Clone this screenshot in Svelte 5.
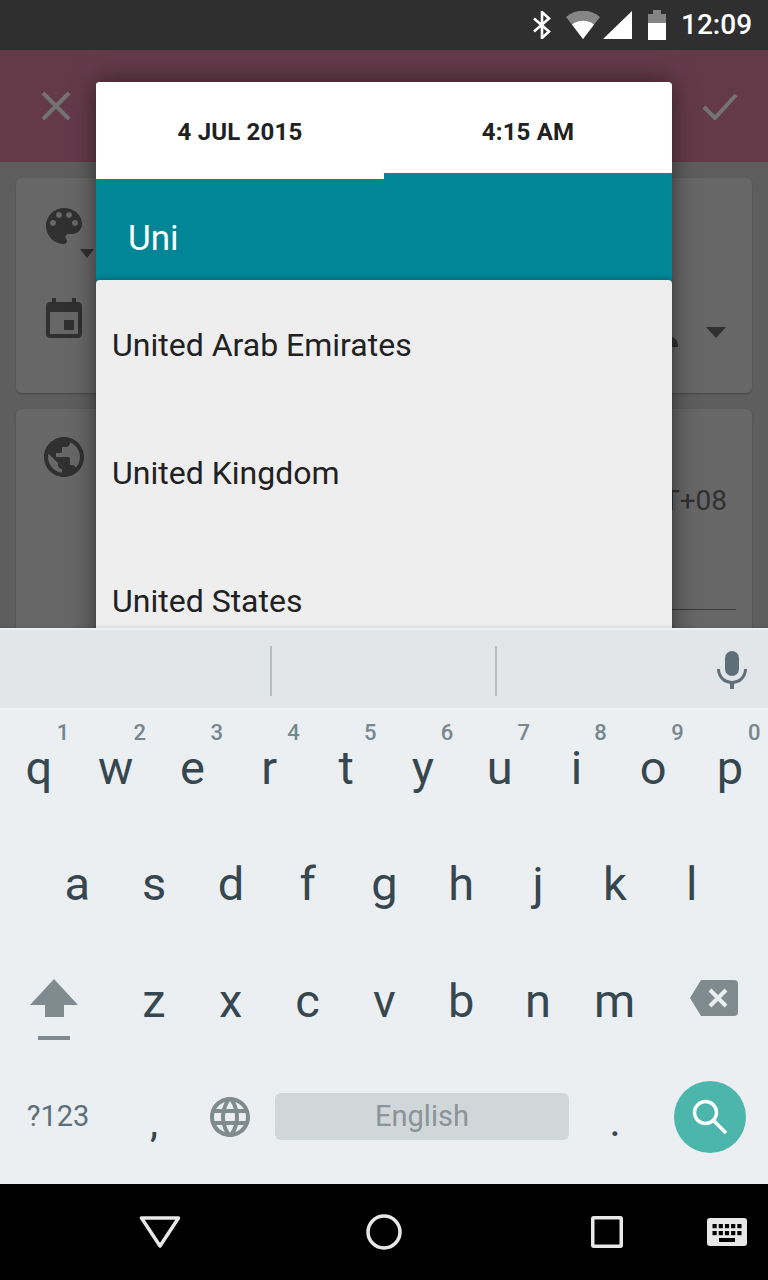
<script>
  const row1 = [['q','1'],['w','2'],['e','3'],['r','4'],['t','5'],['y','6'],['u','7'],['i','8'],['o','9'],['p','0']];
  const row2 = ['a','s','d','f','g','h','j','k','l'];
  const row3 = ['z','x','c','v','b','n','m'];
  const countries = ['United Arab Emirates','United Kingdom','United States'];
</script>

<div class="phone">
  <header class="status">
    <svg class="s-bt" width="20" height="28" viewBox="0 0 20 28"><path d="M2 7.5 L17 20.5 L10 27 V1 L17 7.5 L2 20.5" fill="none" stroke="#fff" stroke-width="2.6"/></svg>
    <svg class="s-wifi" width="34" height="28" viewBox="0 0 34 28"><path d="M0 6 A26 26 0 0 1 34 6 L17 28 Z" fill="#858585"/><path d="M6 13.5 A18 18 0 0 1 28 13.5 L17 28 Z" fill="#fff"/></svg>
    <svg class="s-sig" width="29" height="28" viewBox="0 0 29 28"><path d="M0 28 L29 0 V28 Z" fill="#fff"/></svg>
    <svg class="s-bat" width="20" height="30" viewBox="0 0 20 30"><path d="M1 4 H6 V0 H14 V4 H19 V13 H1 Z" fill="#858585"/><rect x="1" y="13" width="18" height="17" fill="#fff"/></svg>
    <span class="clock">12:09</span>
  </header>

  <div class="screen">
    <div class="toolbar">
      <svg width="32" height="32" viewBox="0 0 32 32"><path d="M3 3 L29 29 M29 3 L3 29" stroke="#737373" stroke-width="4"/></svg>
      <svg width="36" height="28" viewBox="0 0 36 28"><path d="M2 15 L13 26 L34 3" fill="none" stroke="#737373" stroke-width="4"/></svg>
    </div>
    <main class="content">
      <section class="card first">
        <svg class="ic" width="48" height="48" viewBox="0 0 24 24"><path fill="#303030" d="M12 3c-4.97 0-9 4.03-9 9s4.03 9 9 9c.83 0 1.5-.67 1.5-1.5 0-.39-.15-.74-.39-1.01-.23-.26-.38-.61-.38-.99 0-.83.67-1.5 1.5-1.5H16c2.76 0 5-2.24 5-5 0-4.42-4.03-8-9-8zm-5.5 9c-.83 0-1.5-.67-1.5-1.5S5.67 9 6.5 9 8 9.67 8 10.5 7.33 12 6.5 12zm3-4C8.67 8 8 7.33 8 6.5S8.67 5 9.5 5s1.5.67 1.5 1.5S10.33 8 9.5 8zm5 0c-.83 0-1.5-.67-1.5-1.5S13.67 5 14.5 5s1.5.67 1.5 1.5S15.33 8 14.5 8zm3 4c-.83 0-1.5-.67-1.5-1.5S16.67 9 17.5 9s1.5.67 1.5 1.5-.67 1.5-1.5 1.5z"/></svg>
        <span class="mini-caret"></span>
        <svg class="ic cal" width="48" height="48" viewBox="0 0 24 24"><path fill="#303030" d="M17 12h-5v5h5v-5zM16 1v2H8V1H6v2H5c-1.11 0-1.99.9-1.99 2L3 19c0 1.1.89 2 2 2h14c1.1 0 2-.9 2-2V5c0-1.1-.9-2-2-2h-1V1h-2zm3 18H5V8h14v11z"/></svg>
        <span class="blob"></span>
        <span class="caret"></span>
      </section>
      <section class="card second">
        <svg class="ic globe" width="48" height="48" viewBox="0 0 24 24"><path fill="#303030" d="M12 2C6.48 2 2 6.48 2 12s4.48 10 10 10 10-4.48 10-10S17.52 2 12 2zm-1 17.93c-3.95-.49-7-3.85-7-7.93 0-.62.08-1.21.21-1.79L9 15v1c0 1.1.9 2 2 2v1.93zm6.9-2.54c-.26-.81-1-1.39-1.9-1.39h-1v-3c0-.55-.45-1-1-1H8v-2h2c.55 0 1-.45 1-1V7h2c1.1 0 2-.9 2-2v-.41c2.93 1.19 5 4.06 5 7.41 0 2.08-.8 3.97-2.1 5.39z"/></svg>
        <div class="tz">GMT+08</div>
        <div class="tz-line"></div>
      </section>
    </main>

    <div class="dialog">
      <div class="tabs">
        <div class="tab active">4 JUL 2015</div>
        <div class="tab">4:15 AM</div>
      </div>
      <div class="search">Uni</div>
      <ul class="list">
        {#each countries as c}
          <li>{c}</li>
        {/each}
      </ul>
    </div>
  </div>

  <div class="keyboard">
    <div class="strip">
      <span class="sep one"></span>
      <span class="sep two"></span>
      <svg class="mic" width="30" height="38" viewBox="0 0 30 38"><rect x="8" y="0" width="14" height="25" rx="7" fill="#5e6f7a"/><path d="M1.5 18 C2 36 28 36 28.5 18" fill="none" stroke="#5e6f7a" stroke-width="3"/><rect x="13" y="30" width="4" height="8" fill="#5e6f7a"/></svg>
    </div>
    <div class="keys">
      <div class="row r1">
        {#each row1 as [k, h]}
          <div class="key">{k}<span class="hint">{h}</span></div>
        {/each}
      </div>
      <div class="row r2">
        {#each row2 as k}
          <div class="key">{k}</div>
        {/each}
      </div>
      <div class="row r3">
        <div class="key k-shift">
          <svg width="48" height="62" viewBox="0 0 48 62"><path d="M24 0 L48 26 H34 V38 H15 V26 H0 Z" fill="#7f8b8f"/><rect x="8" y="57" width="32" height="4" fill="#7f8b8f"/></svg>
        </div>
        {#each row3 as k}
          <div class="key">{k}</div>
        {/each}
        <div class="key k-back">
          <svg width="48" height="36" viewBox="0 0 48 36"><path d="M11 0 H44 Q48 0 48 4 V32 Q48 36 44 36 H11 L0 18 Z" fill="#7f8b8f"/><path d="M20 10 L36 26 M36 10 L20 26" stroke="#ebeff2" stroke-width="4"/></svg>
        </div>
      </div>
      <div class="row r4">
        <div class="key sym">?123</div>
        <div class="key punct">,</div>
        <div class="key">
          <svg width="48" height="48" viewBox="0 0 24 24"><path fill="#7f8b8f" d="M11.99 2C6.47 2 2 6.48 2 12s4.47 10 9.99 10C17.52 22 22 17.52 22 12S17.52 2 11.99 2zm6.93 6h-2.95c-.32-1.25-.78-2.45-1.38-3.56 1.84.63 3.37 1.91 4.33 3.56zM12 4.04c.83 1.2 1.48 2.53 1.91 3.96h-3.82c.43-1.43 1.08-2.76 1.91-3.96zM4.26 14C4.1 13.36 4 12.69 4 12s.1-1.36.26-2h3.38c-.08.66-.14 1.32-.14 2 0 .68.06 1.34.14 2H4.26zm.82 2h2.95c.32 1.25.78 2.45 1.38 3.56-1.84-.63-3.37-1.9-4.33-3.56zm2.95-8H5.08c.96-1.66 2.49-2.93 4.33-3.56C8.81 5.55 8.35 6.75 8.03 8zM12 19.96c-.83-1.2-1.48-2.53-1.91-3.96h3.82c-.43 1.43-1.08 2.76-1.91 3.96zM14.34 14H9.66c-.09-.66-.16-1.32-.16-2 0-.68.07-1.35.16-2h4.68c.09.65.16 1.32.16 2 0 .68-.07 1.34-.16 2zm.25 5.56c.6-1.11 1.06-2.31 1.38-3.56h2.95c-.96 1.65-2.49 2.93-4.33 3.56zM16.36 14c.08-.66.14-1.32.14-2 0-.68-.06-1.34-.14-2h3.38c.16.64.26 1.31.26 2s-.1 1.36-.26 2h-3.38z"/></svg>
        </div>
        <div class="key"><div class="space">English</div></div>
        <div class="key punct">.</div>
        <div class="key k-go">
          <div class="go">
            <svg width="36" height="36" viewBox="0 0 36 36"><circle cx="13.5" cy="13.5" r="11" fill="none" stroke="#fff" stroke-width="3.4"/><path d="M21.5 21.5 L34 34" stroke="#fff" stroke-width="3.6"/></svg>
          </div>
        </div>
      </div>
    </div>
  </div>

  <nav class="nav">
    <svg class="n-back" width="42" height="32" viewBox="0 0 42 32"><path d="M2.5 2 H39.5 L21 30 Z" fill="none" stroke="#e8e8e8" stroke-width="3.5" stroke-linejoin="round"/></svg>
    <svg class="n-home" width="36" height="36" viewBox="0 0 36 36"><circle cx="18" cy="18" r="16" fill="none" stroke="#e8e8e8" stroke-width="3.5"/></svg>
    <svg class="n-rec" width="32" height="32" viewBox="0 0 32 32"><rect x="1.75" y="1.75" width="28.5" height="28.5" rx="1" fill="none" stroke="#e8e8e8" stroke-width="3.5"/></svg>
    <svg class="n-kb" width="40" height="28" viewBox="0 0 40 28">
      <rect width="40" height="28" rx="3" fill="#e8e8e8"/>
      {#each [0,1,2,3,4] as i}
        <rect x={5.5 + i * 6.2} y="6" width="4.2" height="4.2" fill="#000"/>
        <rect x={5.5 + i * 6.2} y="13" width="4.2" height="4.2" fill="#000"/>
      {/each}
      <rect x="12" y="20" width="16" height="4" fill="#000"/>
    </svg>
  </nav>
</div>

<style>
  :global(body) { margin: 0; background: #000; }
  .phone {
    width: 768px; height: 1280px; display: flex; flex-direction: column; overflow: hidden;
    font-family: Roboto, "Liberation Sans", sans-serif;
  }
  .status {
    height: 50px; flex: none; background: #2f2f2f; display: flex; align-items: center;
    justify-content: flex-end; padding-right: 18px; box-sizing: border-box; color: #fff;
  }
  .s-bt { margin-right: 14px; }
  .s-wifi { margin-right: 3px; }
  .s-sig { margin-right: 15px; }
  .s-bat { margin-right: 14px; }
  .clock { font-size: 28px; font-weight: 500; line-height: 52px; width: 69px; white-space: nowrap; }

  .screen { position: relative; height: 578px; flex: none; overflow: hidden; background: #5e5e5e; }
  .toolbar {
    height: 112px; background: #643a49; display: flex; align-items: center;
    justify-content: space-between; padding: 0 30px 0 40px; box-sizing: border-box;
  }
  .content { padding: 16px; display: flex; flex-direction: column; gap: 16px; }
  .card {
    background: #676767; border-radius: 6px; position: relative;
    box-shadow: 0 1px 2px rgba(0,0,0,.25);
  }
  .first { height: 215px; padding: 24px 0 0 24px; box-sizing: border-box; }
  .second { height: 320px; padding: 24px 0 0 24px; box-sizing: border-box; }
  .ic { display: block; }
  .cal { margin-top: 46px; }
  .mini-caret {
    position: absolute; left: 64px; top: 71px; width: 0; height: 0;
    border-left: 7.5px solid transparent; border-right: 7.5px solid transparent; border-top: 9px solid #303030;
  }
  .caret {
    position: absolute; right: 26px; top: 149px; width: 0; height: 0;
    border-left: 10px solid transparent; border-right: 10px solid transparent; border-top: 11px solid #303030;
  }
  .blob { position: absolute; left: 644px; top: 159px; width: 18px; height: 10px; border-radius: 0 8px 0 0; background: #303030; }
  .tz { position: absolute; right: 25px; top: 76px; font-size: 28px; line-height: 32px; color: #303030; }
  .tz-line { position: absolute; right: 16px; width: 300px; top: 200px; height: 1px; background: #3a3a3a; }

  .dialog {
    position: absolute; left: 96px; top: 32px; width: 576px; height: 620px;
    border-radius: 4px; background: #008697; box-shadow: 0 0 26px rgba(0,0,0,.5);
    display: flex; flex-direction: column;
  }
  .tabs { display: flex; height: 91px; flex: none; border-radius: 4px 4px 0 0; background: #fff; }
  .tab {
    flex: 1; font-size: 24px; font-weight: 700; color: #212121; text-align: center;
    line-height: 101px; letter-spacing: .2px;
  }
  .tab.active { height: 97px; background: #fff; border-radius: 4px 0 0 0; position: relative; }
  .search {
    height: 107px; flex: none; box-sizing: border-box; color: #fff; font-size: 35px;
    padding: 43px 0 0 32px; line-height: 46px;
  }
  .list {
    margin: 0; padding: 0; list-style: none; background: #eeeeee; border-radius: 4px 4px 0 0;
    flex: 1; box-shadow: 0 -2px 4px rgba(0,0,0,.2);
  }
  .list li { height: 128px; line-height: 130px; padding-left: 16px; font-size: 32px; color: #212121; }

  .keyboard {
    height: 556px; flex: none; background: #ebeff2; position: relative; z-index: 1;
    display: flex; flex-direction: column; box-shadow: 0 -1px 3px rgba(0,0,0,.1);
  }
  .strip {
    height: 82px; flex: none; box-sizing: border-box; background: #e2e6e9;
    border-top: 2px solid #edf0f3; border-bottom: 2px solid #f0f3f5; position: relative;
  }
  .sep { position: absolute; top: 16px; height: 50px; width: 2px; background: #b7bfc3; }
  .sep.one { left: 270px; }
  .sep.two { left: 495px; }
  .mic { position: absolute; left: 717px; top: 21px; }
  .keys { flex: 1; margin-top: -1px; }
  .row { display: grid; height: 116.5px; }
  .r1 { grid-template-columns: repeat(10, 76.8px); margin-left: .5px; }
  .r2 { grid-template-columns: repeat(9, 76.8px); margin-left: 38.9px; }
  .r3 { grid-template-columns: 115.5px repeat(7, 76.8px) 114.9px; }
  .r4 { grid-template-columns: 116px 76px 76px 308px 78px 114px; }
  .key {
    position: relative; display: flex; align-items: center; justify-content: center;
    font-size: 47px; color: #37474f; line-height: 1;
  }
  .k-shift { justify-content: flex-start; padding: 20px 0 0 30px; box-sizing: border-box; }
  .k-back { justify-content: flex-start; padding: 0 0 4px 36.9px; box-sizing: border-box; }
  .k-go { justify-content: flex-start; padding-left: 20px; box-sizing: border-box; }
  .hint { position: absolute; right: 8px; top: 12px; font-size: 22px; font-weight: 500; color: #78868d; line-height: 24px; }
  .sym { font-size: 29px; color: #5e6f7a; }
  .punct { font-size: 36px; padding-top: 14px; box-sizing: border-box; font-weight: 500; }
  .space {
    width: 294px; height: 47px; background: #d1d6d9; border-radius: 6px; display: flex;
    align-items: center; justify-content: center; font-size: 29px; color: #8a9499;
  }
  .go {
    width: 72px; height: 72px; border-radius: 50%; background: #4db6ac; display: flex;
    align-items: center; justify-content: center;
  }

  .nav { height: 96px; flex: none; background: #000; display: flex; align-items: center; position: relative; }
  .n-back { margin-left: 139px; }
  .n-home { margin-left: 185px; }
  .n-rec { margin-left: 189px; }
  .n-kb { margin-left: 84px; }
</style>
